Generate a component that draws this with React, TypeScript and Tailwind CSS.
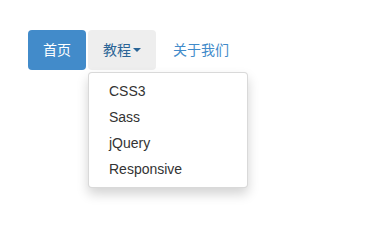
import React from 'react';

const items = ['CSS3', 'Sass', 'jQuery', 'Responsive'];

export default function App() {
  return (
    <div
      className="min-h-screen bg-white pt-[30px] pl-[28px] text-[14px] leading-[20px]"
      style={{ fontFamily: '"Liberation Sans", "Noto Sans CJK SC", sans-serif' }}
    >
      <ul className="flex items-start gap-[2px]">
        <li>
          <a className="block rounded-[4px] bg-[#428bca] px-[15px] py-[10px] text-white">首页</a>
        </li>
        <li className="relative">
          <a className="flex items-center rounded-[4px] bg-[#eeeeee] px-[15px] py-[10px] text-[#2a6496]">
            教程
            <span className="ml-[2px] inline-block h-0 w-0 border-x-[4px] border-t-[4px] border-x-transparent border-t-[#2a6496]" />
          </a>
          <ul className="absolute left-0 top-full mt-[2px] min-w-[160px] rounded-[4px] border border-[rgba(0,0,0,0.15)] bg-white py-[5px] shadow-[0_6px_12px_rgba(0,0,0,0.175)]">
            {items.map(i => (
              <li key={i}>
                <a className="block whitespace-nowrap px-[20px] py-[3px] text-[#333333]">{i}</a>
              </li>
            ))}
          </ul>
        </li>
        <li>
          <a className="block rounded-[4px] px-[15px] py-[10px] text-[#428bca]">关于我们</a>
        </li>
      </ul>
    </div>
  );
}
